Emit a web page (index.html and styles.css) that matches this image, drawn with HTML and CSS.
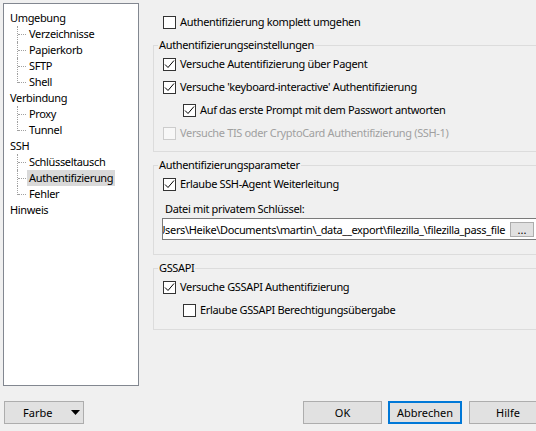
FILE: index.html
```html
<!DOCTYPE html>
<html lang="de">
<head>
  <meta charset="UTF-8" />
  <meta name="viewport" content="width=device-width, initial-scale=1.0" />
  <title>Einstellungen</title>
  <link rel="stylesheet" href="styles.css">
</head>
<body>
  <div class="dialog">
    <div class="main">
      <!-- Settings page tree -->
      <ul class="tree">
        <li><span class="label">Umgebung</span>
          <ul>
            <li><span class="label">Verzeichnisse</span></li>
            <li><span class="label">Papierkorb</span></li>
            <li><span class="label">SFTP</span></li>
            <li><span class="label">Shell</span></li>
          </ul>
        </li>
        <li><span class="label">Verbindung</span>
          <ul>
            <li><span class="label">Proxy</span></li>
            <li><span class="label">Tunnel</span></li>
          </ul>
        </li>
        <li><span class="label">SSH</span>
          <ul>
            <li><span class="label">Schlüsseltausch</span></li>
            <li class="selected"><span class="label">Authentifizierung</span></li>
            <li><span class="label">Fehler</span></li>
          </ul>
        </li>
        <li><span class="label">Hinweis</span></li>
      </ul>

      <!-- Authentication page -->
      <div class="page">
        <div class="check top-check">
          <span class="box"></span>Authentifizierung komplett umgehen
        </div>

        <fieldset class="group">
          <legend>Authentifizierungseinstellungen</legend>
          <div class="check">
            <span class="box"><svg width="11" height="11" viewBox="0 0 11 11"><path d="M1 5.5 L4 8.5 L10 1.5" fill="none" stroke="#000" stroke-width="1"/></svg></span>Versuche Autentifizierung über Pagent
          </div>
          <div class="check">
            <span class="box"><svg width="11" height="11" viewBox="0 0 11 11"><path d="M1 5.5 L4 8.5 L10 1.5" fill="none" stroke="#000" stroke-width="1"/></svg></span>Versuche 'keyboard-interactive' Authentifizierung
          </div>
          <div class="check sub">
            <span class="box"><svg width="11" height="11" viewBox="0 0 11 11"><path d="M1 5.5 L4 8.5 L10 1.5" fill="none" stroke="#000" stroke-width="1"/></svg></span>Auf das erste Prompt mit dem Passwort antworten
          </div>
          <div class="check disabled">
            <span class="box"></span>Versuche TIS oder CryptoCard Authentifizierung (SSH-1)
          </div>
        </fieldset>

        <fieldset class="group">
          <legend>Authentifizierungsparameter</legend>
          <div class="check">
            <span class="box"><svg width="11" height="11" viewBox="0 0 11 11"><path d="M1 5.5 L4 8.5 L10 1.5" fill="none" stroke="#000" stroke-width="1"/></svg></span>Erlaube SSH-Agent Weiterleitung
          </div>
          <div class="field-label">Datei mit privatem Schlüssel:</div>
          <div class="file-field">
            <div class="file-path"><span>C:\Users\Heike\Documents\martin\_data__export\filezilla_\filezilla_pass_file</span></div>
            <button class="browse" type="button">...</button>
          </div>
        </fieldset>

        <fieldset class="group gss">
          <legend>GSSAPI</legend>
          <div class="check">
            <span class="box"><svg width="11" height="11" viewBox="0 0 11 11"><path d="M1 5.5 L4 8.5 L10 1.5" fill="none" stroke="#000" stroke-width="1"/></svg></span>Versuche GSSAPI Authentifizierung
          </div>
          <div class="check sub">
            <span class="box"></span>Erlaube GSSAPI Berechtigungsübergabe
          </div>
        </fieldset>
      </div>
    </div>

    <!-- Dialog buttons -->
    <div class="buttons">
      <button class="btn color-btn" type="button">
        <span>Farbe</span>
        <svg width="9" height="5" viewBox="0 0 9 5"><polygon points="0,0 9,0 4.5,5" fill="#000"/></svg>
      </button>
      <button class="btn ok" type="button">OK</button>
      <button class="btn default" type="button">Abbrechen</button>
      <button class="btn help" type="button">Hilfe</button>
    </div>
  </div>
</body>
</html>
```

FILE: styles.css
```css
/* Dialog window */
body {
  margin: 0;
  background-color: #f0f0f0;
  color: #000;
  font-family: "Noto Sans", "Liberation Sans", sans-serif;
  font-size: 11px;
  letter-spacing: -0.35px;
  width: 536px;
  height: 431px;
  overflow: hidden;
}

.dialog {
  display: flex;
  flex-direction: column;
  height: 431px;
}

.main {
  display: flex;
  padding: 3px 0 0 3px;
}

/* Tree on the left */
.tree {
  flex: none;
  width: 134px;
  height: 375px;
  margin: 0;
  padding: 6px 0 0;
  border: 1px solid #828790;
  background-color: #fff;
  list-style: none;
  line-height: 16px;
}

.tree li {
  list-style: none;
}

.tree .label {
  display: block;
  width: fit-content;
  height: 16px;
  line-height: 16px;
  padding: 0 2px;
  margin-left: 4px;
  white-space: nowrap;
}

.tree ul {
  margin: 0;
  padding-left: 23px;
}

.tree ul .label {
  margin-left: 0;
}

.tree ul li {
  position: relative;
  height: 16px;
}

/* dotted connector lines */
.tree ul li::before {
  content: "";
  position: absolute;
  left: -9px;
  top: 8px;
  width: 8px;
  border-top: 1px dotted #a0a0a0;
}

.tree ul li::after {
  content: "";
  position: absolute;
  left: -10px;
  top: 0;
  height: 16px;
  border-left: 1px dotted #a0a0a0;
}

.tree ul li:last-child::after {
  height: 9px;
}

.tree .selected .label {
  background-color: #d9d9d9;
}

/* Right page */
.page {
  flex: none;
  width: 394px;
  margin-left: 14px;
  padding-top: 11px;
}

.check {
  display: flex;
  align-items: center;
  height: 16px;
  line-height: 16px;
  white-space: nowrap;
}

.top-check {
  padding-left: 10px;
}

.box {
  flex: none;
  width: 11px;
  height: 11px;
  margin-right: 4px;
  border: 1px solid #333;
  background-color: #fff;
  display: flex;
}

.check.sub {
  padding-left: 20px;
}

.check.disabled {
  color: #a0a0a0;
}

.check.disabled .box {
  border-color: #cccccc;
  background-color: #f7f7f7;
}

.group {
  margin: 7px 0 0;
  padding: 3px 9px 10px;
  border: 1px solid #dcdcdc;
  min-width: 0;
  display: flex;
  flex-direction: column;
  gap: 7px;
}

.group + .group {
  margin-top: 5px;
}

.group legend {
  padding: 0 1px;
  margin-left: -5px;
  line-height: 16px;
  height: 16px;
}

.gss {
  padding-top: 3px;
  padding-bottom: 11px;
}

.field-label {
  height: 16px;
  line-height: 16px;
  padding-left: 2px;
  margin-top: 2px;
}

/* Key file input with browse button */
.file-field {
  display: flex;
  align-items: center;
  height: 20px;
  margin: -6px -1px 4px -1px;
  border: 1px solid #7a7a7a;
  background-color: #fff;
}

.file-path {
  flex: 1;
  display: flex;
  justify-content: flex-end;
  overflow: hidden;
  white-space: nowrap;
  padding-right: 5px;
}

.browse {
  flex: none;
  width: 24px;
  height: 15px;
  margin-right: 3px;
  padding: 0;
  border: 1px solid #adadad;
  background-color: #e1e1e1;
  font: inherit;
  line-height: 9px;
}

/* Bottom button row */
.buttons {
  margin-top: auto;
  display: flex;
  padding: 0 0 7px 4px;
}

.btn {
  flex: none;
  height: 23px;
  padding: 0;
  border: 1px solid #adadad;
  background-color: #e1e1e1;
  color: #000;
  font: inherit;
}

.color-btn {
  width: 80px;
  display: flex;
  align-items: center;
  justify-content: space-between;
  padding: 0 3px 0 18px;
}

.ok {
  width: 79px;
  margin-left: 219px;
}

.default {
  width: 74px;
  margin-left: 6px;
  border-color: #0078d7;
  box-shadow: inset 0 0 0 1px #0078d7;
}

.help {
  width: 78px;
  margin-left: 7px;
}
```
